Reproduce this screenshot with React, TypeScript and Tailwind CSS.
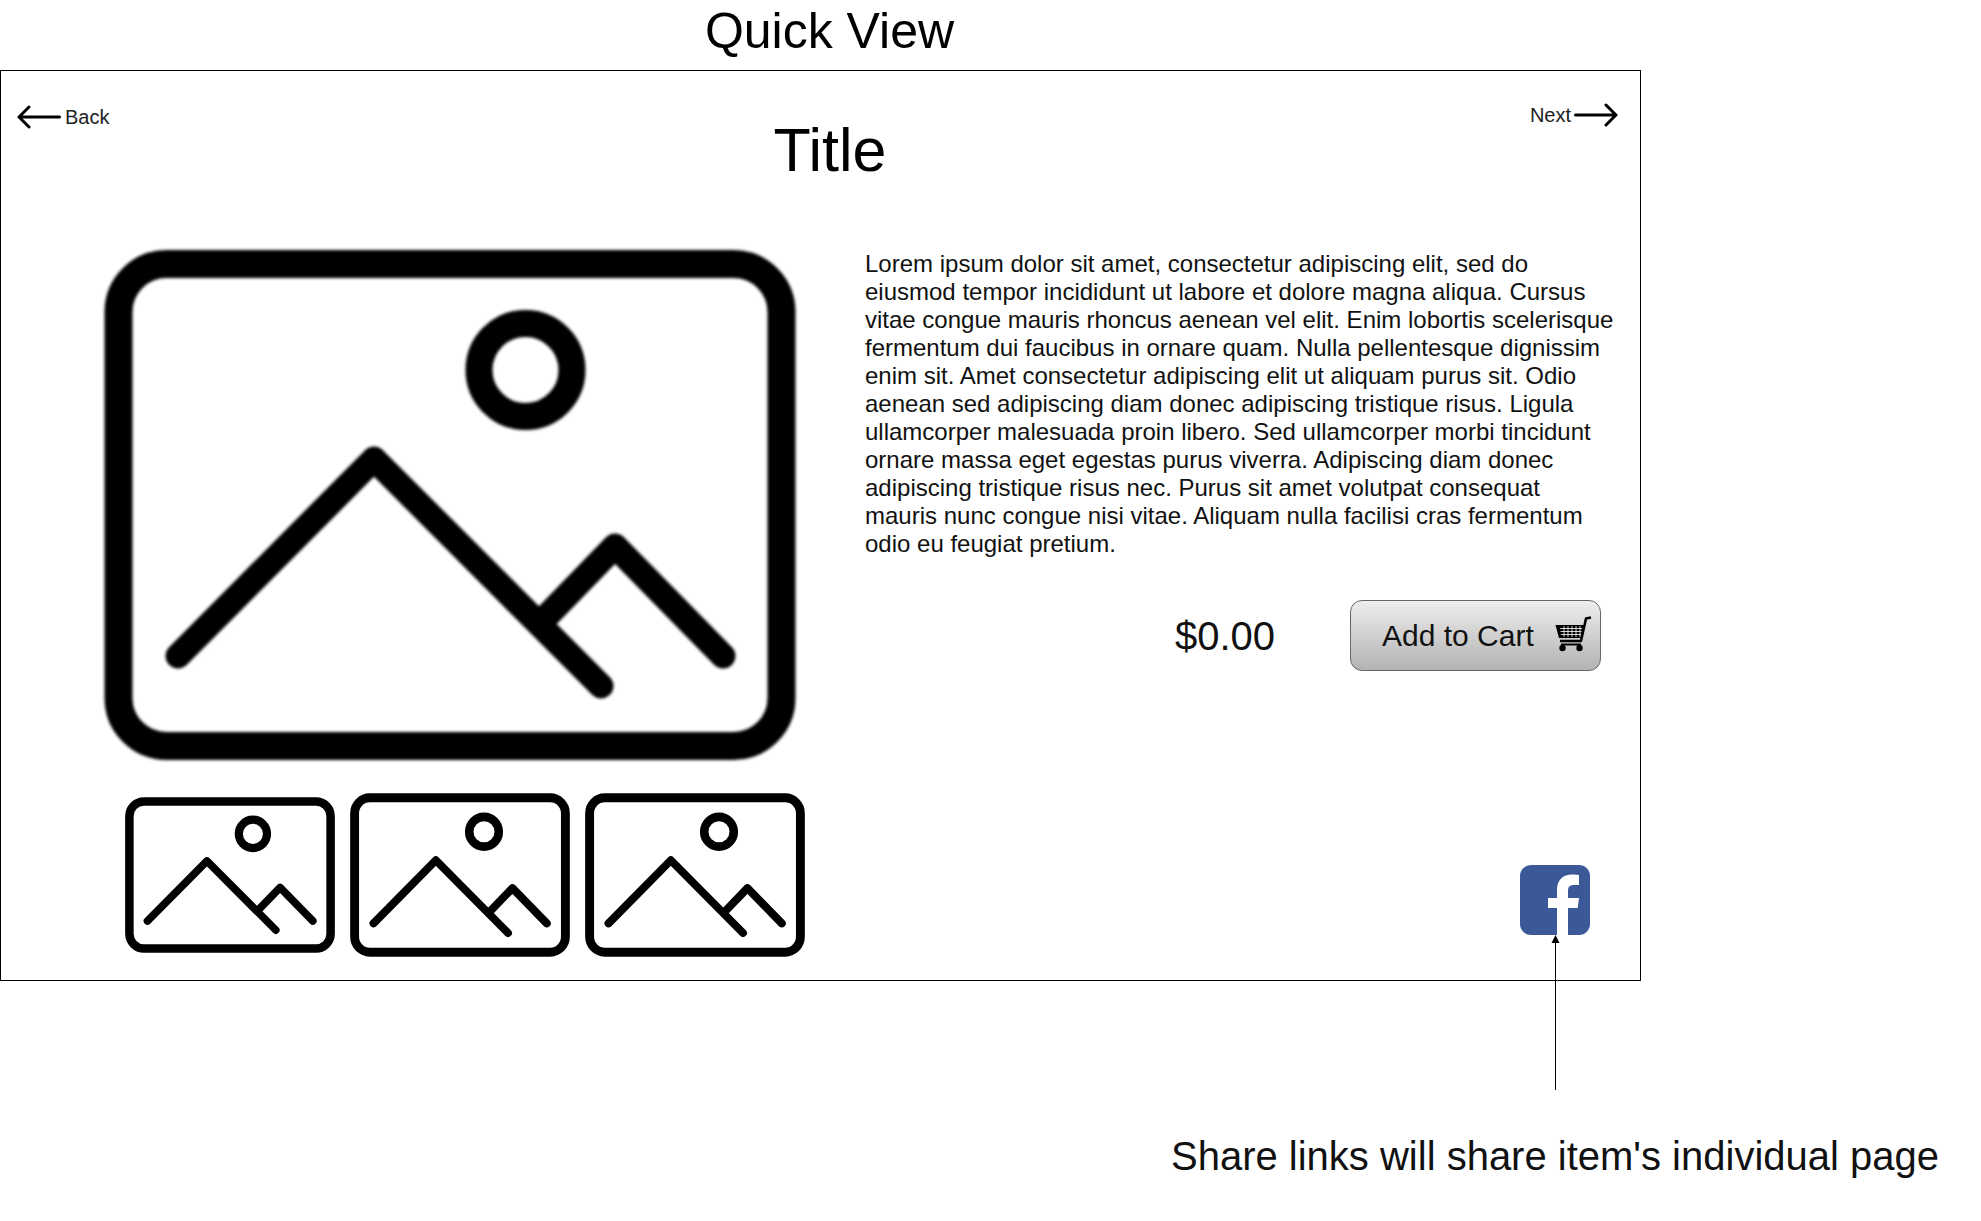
const LOREM =
  "Lorem ipsum dolor sit amet, consectetur adipiscing elit, sed do eiusmod tempor incididunt ut labore et dolore magna aliqua. Cursus vitae congue mauris rhoncus aenean vel elit. Enim lobortis scelerisque fermentum dui faucibus in ornare quam. Nulla pellentesque dignissim enim sit. Amet consectetur adipiscing elit ut aliquam purus sit. Odio aenean sed adipiscing diam donec adipiscing tristique risus. Ligula ullamcorper malesuada proin libero. Sed ullamcorper morbi tincidunt ornare massa eget egestas purus viverra. Adipiscing diam donec adipiscing tristique risus nec. Purus sit amet volutpat consequat mauris nunc congue nisi vitae. Aliquam nulla facilisi cras fermentum odio eu feugiat pretium.";

const ImagePlaceholder = ({ className }: { className: string }) => (
  <svg viewBox="0 0 692 512" preserveAspectRatio="none" fill="none" stroke="#000" className={className}>
    <rect x="14.5" y="15" width="663" height="482" rx="48" strokeWidth="28" />
    <circle cx="421.5" cy="121" r="46.5" strokeWidth="27" />
    <path d="M74 407 L270 210 L497 437 M444 366 L511 297 L619 407" strokeWidth="25" strokeLinecap="round" strokeLinejoin="round" />
  </svg>
);

const CartIcon = () => (
  <svg viewBox="0 0 37 36" className="h-[36px] w-[37px]">
    <path d="M36 1.5 L31 2.5 L26 25 H5" fill="none" stroke="#000" strokeWidth="2.5" strokeLinejoin="round" />
    <path d="M0.5 9 H28.5 L26 22 H4 Z" fill="#000" />
    <path d="M5 12.5 H27 M5.5 15.5 H26.5 M6 18.5 H26 M9 10 V21 M13 10 V21 M17 10 V21 M21 10 V21 M25 10 V21" stroke="#fff" strokeWidth="0.8" />
    <circle cx="7.5" cy="32" r="3.2" fill="#000" />
    <circle cx="24.5" cy="32" r="3.2" fill="#000" />
    <path d="M6 28.5 H26" stroke="#000" strokeWidth="2" />
  </svg>
);

const FacebookIcon = () => (
  <svg viewBox="0 0 70 70" className="h-[70px] w-[70px]">
    <rect width="70" height="70" rx="11" fill="#3b5998" />
    <path
      d="M37 70 V43 H28 V33 H37 V25 C37 15 43 9.5 52 9.5 C55 9.5 58 9.7 59 10 V20 H54 C49.5 20 48 22 48 26 V33 H59 L57.7 43 H48 V70 Z"
      fill="#fff"
    />
  </svg>
);

const NavArrow = ({ flip }: { flip?: boolean }) => (
  <svg viewBox="0 0 44 24" className={flip ? "h-[24px] w-[44px] -scale-x-100" : "h-[24px] w-[44px]"} fill="none" stroke="#000" strokeWidth="3" strokeLinecap="round">
    <path d="M1.5 12 H42 M32 2 L42 12 L32 22" />
  </svg>
);

export default function App() {
  return (
    <div className="min-h-screen w-full bg-white font-['Liberation_Sans',Arial,sans-serif] text-black">
      <h1 className="ml-[9px] flex h-[70px] w-[1641px] items-center justify-center pb-[8px] text-[50px] leading-[58px] font-normal">
        Quick View
      </h1>

      <div className="relative flex h-[911px] w-[1641px] flex-col border border-black">
        <div className="grid grid-cols-[1fr_auto_1fr] items-start pt-[33px] pr-[22px] pl-[16px]">
          <div className="flex items-center gap-[4px] text-[20px] leading-[24px] text-[#222]">
            <NavArrow flip />
            <span className="mt-[1px]">Back</span>
          </div>
          <h2 className="mt-[13px] mb-[1px] ml-[25px] text-[61px] leading-[66px] font-normal">Title</h2>
          <div className="-mt-[1px] flex items-center justify-end gap-[3px] text-[20px] leading-[24px] text-[#222]">
            <span>Next</span>
            <NavArrow />
          </div>
        </div>

        <div className="-mt-[1px] flex flex-1">
          <div className="flex w-[864px] flex-col">
            <ImagePlaceholder className="mt-[66px] ml-[103px] h-[512px] w-[692px] blur-[1.5px]" />
            <div className="mt-[32px] ml-[124px] flex items-center gap-[15px]">
              <ImagePlaceholder className="h-[156px] w-[210px] blur-[0.6px]" />
              <ImagePlaceholder className="h-[164px] w-[220px] blur-[0.6px]" />
              <ImagePlaceholder className="h-[164px] w-[220px] blur-[0.6px]" />
            </div>
          </div>

          <div className="flex flex-1 flex-col">
            <p className="mt-[67px] pr-[26px] text-[24px] leading-[28px] text-[#111]">{LOREM}</p>
            <div className="mt-[42px] flex items-center justify-end gap-[75px] pr-[39px]">
              <span className="text-[40px] leading-[48px] text-[#111]">$0.00</span>
              <button className="flex h-[71px] w-[251px] items-center justify-between rounded-[12px] border border-[#666] bg-gradient-to-b from-[#eeeeee] to-[#b3b3b3] pr-[8px] pl-[31px] text-[30px] leading-[36px] text-[#111]">
                <span>Add to Cart</span>
                <span className="-mt-[4px]">
                  <CartIcon />
                </span>
              </button>
            </div>
            <div className="mt-auto mr-[50px] mb-[45px] self-end">
              <FacebookIcon />
            </div>
          </div>
        </div>

        <svg viewBox="0 0 11 155" className="absolute top-[864px] left-[1549px] h-[155px] w-[11px]">
          <path d="M5.5 8 V155" stroke="#000" strokeWidth="1" />
          <path d="M5.5 0 L9.5 8 H1.5 Z" fill="#000" />
        </svg>
      </div>

      <p className="mt-[151px] pr-[42px] text-right text-[40px] leading-[48px] text-[#111]">
        Share links will share item's individual page
      </p>
    </div>
  );
}
